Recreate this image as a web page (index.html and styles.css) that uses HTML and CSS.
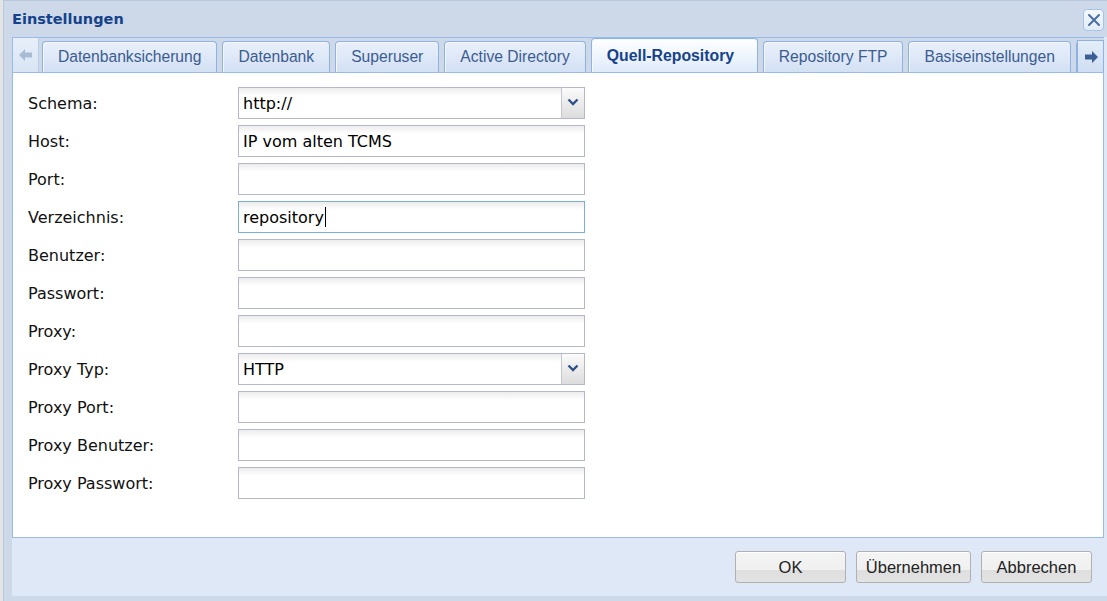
FILE: index.html
```html
<!DOCTYPE html>
<html lang="de">
<head>
<meta charset="utf-8">
<title>Einstellungen</title>
<link rel="stylesheet" href="styles.css">
</head>
<body>
<div class="window">
  <div class="header">
    <span class="title">Einstellungen</span>
    <button class="close" type="button" aria-label="Schließen">
      <svg width="14" height="14" viewBox="0 0 14 14"><path d="M2 2 L12 12 M12 2 L2 12" stroke="#4a6ea3" stroke-width="2" stroke-linecap="round" fill="none"/></svg>
    </button>
  </div>
  <div class="body">
    <div class="tabbar">
      <div class="scroller left">
        <svg width="14" height="12" viewBox="0 0 14 12"><path d="M0 6 L6 0 L6 3.5 L13 3.5 L13 8.5 L6 8.5 L6 12 Z" fill="#a9bbd3"/></svg>
      </div>
      <div class="tabs">
        <div class="tab">Datenbanksicherung</div>
        <div class="tab">Datenbank</div>
        <div class="tab">Superuser</div>
        <div class="tab">Active Directory</div>
        <div class="tab active">Quell-Repository</div>
        <div class="tab">Repository FTP</div>
        <div class="tab">Basiseinstellungen</div>
        <div class="tab stub"></div>
      </div>
      <div class="scroller right">
        <svg width="14" height="12" viewBox="0 0 14 12"><path d="M14 6 L8 0 L8 3.5 L1 3.5 L1 8.5 L8 8.5 L8 12 Z" fill="#3b5f95"/></svg>
      </div>
    </div>
    <div class="panel">
      <div class="form">
        <label class="label">Schema:</label>
        <div class="field combo"><span class="value">http://</span><span class="trigger"><svg width="12" height="8" viewBox="0 0 12 8"><path d="M1.5 1.5 L6 6 L10.5 1.5" stroke="#2f5189" stroke-width="2.4" fill="none"/></svg></span></div>

        <label class="label">Host:</label>
        <div class="field"><span class="value">IP vom alten TCMS</span></div>

        <label class="label">Port:</label>
        <div class="field"></div>

        <label class="label">Verzeichnis:</label>
        <div class="field focus"><span class="value">repository</span><span class="caret"></span></div>

        <label class="label">Benutzer:</label>
        <div class="field"></div>

        <label class="label">Passwort:</label>
        <div class="field"></div>

        <label class="label">Proxy:</label>
        <div class="field"></div>

        <label class="label">Proxy Typ:</label>
        <div class="field combo"><span class="value">HTTP</span><span class="trigger"><svg width="12" height="8" viewBox="0 0 12 8"><path d="M1.5 1.5 L6 6 L10.5 1.5" stroke="#2f5189" stroke-width="2.4" fill="none"/></svg></span></div>

        <label class="label">Proxy Port:</label>
        <div class="field"></div>

        <label class="label">Proxy Benutzer:</label>
        <div class="field"></div>

        <label class="label">Proxy Passwort:</label>
        <div class="field"></div>
      </div>
    </div>
    <div class="footer">
      <button class="btn ok" type="button">OK</button>
      <button class="btn apply" type="button">Übernehmen</button>
      <button class="btn cancel" type="button">Abbrechen</button>
    </div>
  </div>
</div>
</body>
</html>
```

FILE: styles.css
```css
html, body {
  margin: 0;
  padding: 0;
}
body {
  background: #e4e4e4;
  width: 1107px;
  height: 601px;
  overflow: hidden;
}
.window {
  margin-left: 3px;
  width: 1104px;
  height: 601px;
  box-sizing: border-box;
  background: #cdd9e8;
  border-left: 1px solid #b8c8dc;
  border-top: 1px solid #b8c8dc;
  display: flex;
  flex-direction: column;
}
.header {
  height: 36px;
  display: flex;
  align-items: center;
  justify-content: space-between;
  padding: 0 3px 0 8px;
  box-sizing: border-box;
}
.title {
  font-family: "DejaVu Sans", sans-serif;
  font-weight: bold;
  font-size: 14.5px;
  color: #15428b;
  margin-top: -1px;
}
.close {
  width: 21px;
  height: 22px;
  padding: 0;
  margin-top: 2px;
  border: 1px solid #a6c3e8;
  border-radius: 4px;
  background: linear-gradient(#f4f8fd, #e2ebf7);
  display: flex;
  align-items: center;
  justify-content: center;
}
.body {
  margin-left: 8px;
  flex: 1;
  display: flex;
  flex-direction: column;
  background: #dfe8f6;
  margin-bottom: 5px;
}
.tabbar {
  height: 35px;
  display: flex;
  align-items: flex-end;
  background: #cdd9e8;
  border-top: 1px solid #99bbe8;
  border-left: 1px solid #99bbe8;
  box-sizing: border-box;
  width: 1092px;
  position: relative;
  z-index: 1;
}
.scroller {
  width: 26px;
  height: 33px;
  box-sizing: border-box;
  display: flex;
  align-items: center;
  justify-content: center;
  flex-shrink: 0;
}
.scroller.left {
  background: linear-gradient(#e7eff9, #d9e5f4);
  border-right: 1px solid #b9cde9;
  height: 34px;
}
.scroller.right {
  background: linear-gradient(#e3edf9, #cfdef2);
  border: 1px solid #8db2e3;
  border-bottom: none;
  width: 27px;
  height: 32px;
}
.tabs {
  flex: 1;
  display: flex;
  align-items: flex-end;
  gap: 5px;
  overflow: hidden;
  padding-left: 3px;
  height: 35px;
}
.tab {
  flex-shrink: 0;
  height: 31px;
  box-sizing: border-box;
  padding: 0 15px;
  display: flex;
  align-items: center;
  border: 1px solid #8db2e3;
  border-bottom: none;
  border-radius: 4px 4px 0 0;
  background: linear-gradient(#e9f0fb, #d3e1f4);
  font-family: "Liberation Sans", sans-serif;
  font-size: 15.65px;
  color: #3b5c91;
  box-shadow: inset 1px 1px 0 #f4f8fd;
}
.tab.stub {
  width: 20px;
}
.tab.active {
  font-weight: bold;
  font-size: 15.8px;
  padding: 0 14px 0 15px;
  min-width: 167px;
  color: #15428b;
  background: linear-gradient(#ffffff, #deeafa);
  margin-bottom: -1px;
  height: 35px;
}
.panel {
  height: 466px;
  box-sizing: border-box;
  background: #ffffff;
  border: 1px solid #99bbe8;
  width: 1092px;
  padding: 14px 15px;
}
.form {
  display: grid;
  grid-template-columns: 210px 347px;
  row-gap: 6px;
  align-items: center;
}
.label {
  font-family: "DejaVu Sans", sans-serif;
  font-size: 16px;
  color: #111;
}
.field {
  height: 32px;
  box-sizing: border-box;
  border: 1px solid #b5b8c8;
  background: linear-gradient(#ececec 0, #ffffff 8px, #ffffff 100%);
  display: flex;
  align-items: center;
  padding-left: 4px;
  font-family: "DejaVu Sans", sans-serif;
  font-size: 16px;
  color: #000;
}
.field.focus {
  border-color: #7eadd9;
}
.caret {
  width: 1px;
  height: 20px;
  background: #000;
  margin-left: 1px;
}
.value {
  flex: 0 1 auto;
}
.field.combo .value {
  flex-grow: 1;
}
.trigger {
  width: 23px;
  height: 30px;
  box-sizing: border-box;
  border-left: 1px solid #c4c7d2;
  background: linear-gradient(#fbfbfb, #dcdcdc);
  display: flex;
  align-items: center;
  justify-content: center;
  padding-bottom: 2px;
}
.footer {
  flex: 1;
  display: flex;
  justify-content: flex-end;
  align-items: flex-start;
  gap: 10px;
  padding: 13px 12px 0 0;
  width: 1092px;
  box-sizing: border-box;
}
.btn {
  height: 32px;
  box-sizing: border-box;
  border: 1px solid #b0b0b0;
  border-radius: 3px;
  background: linear-gradient(#f4f4f4 0, #f0f0f0 60%, #dedede 60%, #e3e3e3 100%);
  font-family: "Liberation Sans", sans-serif;
  font-size: 16.5px;
  color: #222;
  padding: 0;
  box-shadow: inset 0 1px 0 #ffffff;
}
.btn.ok { width: 111px; }
.btn.apply { width: 115px; }
.btn.cancel { width: 111px; }
```
